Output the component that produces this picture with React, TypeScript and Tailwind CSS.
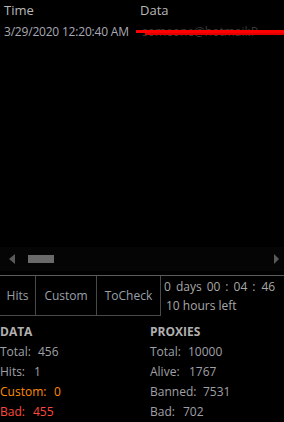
import React from 'react';

const font = { fontFamily: '"Open Sans", "Noto Sans", sans-serif' };

const Stat = ({ label, value, w, color = 'text-[#a0a0a8]' }: { label: string; value: string; w: string; color?: string }) => (
  <div className={`h-5 leading-5 flex ${color}`}>
    <span className={w}>{label}</span>
    <span>{value}</span>
  </div>
);

export default function App() {
  return (
    <div className="w-[284px] h-[422px] bg-black text-[12px] text-[#a8a8a8] overflow-hidden flex flex-col" style={font}>
      {/* grid */}
      <div className="h-[249px] flex flex-col">
        <div className="flex h-[21px] items-end text-[13px] text-[#b8b8b8] pb-[1px]">
          <span className="w-[140px] pl-[4px]">Time</span>
          <span>Data</span>
        </div>
        <div className="flex h-[22px] items-center">
          <span className="w-[136px] pl-[4px] whitespace-nowrap text-[#a9a9b4] tracking-[-0.2px]">3/29/2020 12:20:40 AM</span>
          <span className="relative flex-1 h-[18px] overflow-hidden whitespace-nowrap text-[#3a3a3a]">
            <span className="pl-[6px] leading-[18px]">someone@hotmail:P</span>
            <span className="absolute left-0 right-0 top-[7px] h-[3px] bg-[#ff0000]" />
            <span className="absolute left-[9px] right-0 top-[10px] h-[2px] bg-[#e00000]" />
          </span>
        </div>
      </div>

      {/* horizontal scrollbar */}
      <div className="h-[24px] flex items-center bg-[#050505]">
        <svg width="6" height="10" viewBox="0 0 6 10" className="ml-[9px]">
          <path d="M6 0 L0 5 L6 10 Z" fill="#5a5a5a" />
        </svg>
        <div className="ml-[13px] w-[26px] h-[8px] bg-[#6a6a6a]" />
        <div className="flex-1" />
        <svg width="5" height="10" viewBox="0 0 5 10" className="mr-[5px]">
          <path d="M0 0 L5 5 L0 10 Z" fill="#5a5a5a" />
        </svg>
      </div>

      <div className="h-[4px]" />

      {/* buttons + timer */}
      <div className="border-t border-[#5c5c5c] flex h-[41px]">
        <div className="flex">
          <button className="w-[36px] h-[40px] border-r border-b border-[#4a4a4a] text-[#9aa0aa]">Hits</button>
          <button className="w-[61px] h-[40px] border-r border-b border-[#4a4a4a] text-[#9aa0aa]">Custom</button>
          <button className="w-[64px] h-[40px] border-r border-b border-[#4a4a4a] text-[#9aa0aa]">ToCheck</button>
        </div>
        <div className="flex flex-col pl-[3px] pt-[1px] text-[#a8a8a8]">
          <div className="h-[19px] leading-[19px] whitespace-nowrap flex">
            <span>0</span>
            <span className="ml-[5px]">days</span>
            <span className="ml-[5px]">00</span>
            <span className="ml-[5px]">:</span>
            <span className="ml-[5px]">04</span>
            <span className="ml-[5px]">:</span>
            <span className="ml-[6px]">46</span>
          </div>
          <div className="h-[19px] leading-[19px] pl-[2px] whitespace-nowrap">10 hours left</div>
        </div>
      </div>

      {/* stats */}
      <div className="flex pt-[6px]">
        <div className="w-[150px]">
          <div className="h-5 leading-5 font-bold text-[#b0b0b0]">DATA</div>
          <Stat label="Total:" value="456" w="w-[38px]" />
          <Stat label="Hits:" value="1" w="w-[34px]" />
          <Stat label="Custom:" value="0" w="w-[54px]" color="text-[#ff8c00]" />
          <Stat label="Bad:" value="455" w="w-[33px]" color="text-[#ff4a3a]" />
        </div>
        <div className="flex-1">
          <div className="h-5 leading-5 font-bold text-[#b0b0b0]">PROXIES</div>
          <Stat label="Total:" value="10000" w="w-[38px]" />
          <Stat label="Alive:" value="1767" w="w-[39px]" />
          <Stat label="Banned:" value="7531" w="w-[53px]" />
          <Stat label="Bad:" value="702" w="w-[33px]" />
        </div>
      </div>
    </div>
  );
}
